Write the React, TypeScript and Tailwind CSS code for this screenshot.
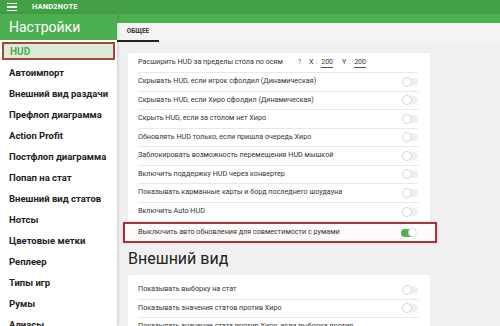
import React from "react";

const sideItems = [
  "Автоимпорт",
  "Внешний вид раздачи",
  "Префлоп диаграмма",
  "Action Profit",
  "Постфлоп диаграмма",
  "Попап на стат",
  "Внешний вид статов",
  "Нотсы",
  "Цветовые метки",
  "Реплеер",
  "Типы игр",
  "Румы",
  "Алиасы",
];

const rows1 = [
  "Скрывать HUD, если игрок сфолдил (Динамическая)",
  "Скрывать HUD, если Хиро сфолдил (Динамическая)",
  "Скрыть HUD, если за столом нет Хиро",
  "Обновлять HUD только, если пришла очередь Хиро",
  "Заблокировать возможность перемещения HUD мышкой",
  "Включить поддержку HUD через конвертер",
  "Показывать карманные карты и борд последнего шоудауна",
  "Включить Auto HUD",
];

const rows2 = [
  "Показывать выборку на стат",
  "Показывать значения статов против Хиро",
];

function Toggle({ on }: { on?: boolean }) {
  if (on) {
    return (
      <div className="relative w-[16px] h-[10px] shrink-0">
        <div className="absolute left-0 top-[1px] w-[13px] h-[8px] rounded-full bg-[#4caf50]" />
        <div className="absolute left-[7px] top-0 w-[9px] h-[9px] rounded-full bg-white border border-[#ddd]" />
      </div>
    );
  }
  return (
    <div className="relative w-[16px] h-[10px] shrink-0">
      <div className="absolute left-[3px] top-[1px] w-[13px] h-[8px] rounded-full bg-[#f0f0f0]" />
      <div className="absolute left-0 top-0 w-[10px] h-[10px] rounded-full bg-white border border-[#d6d6d6]" />
    </div>
  );
}

function Row({ text, last }: { text: string; last?: boolean }) {
  return (
    <div
      className={
        "flex items-center justify-between h-[18.5px] " +
        (last ? "" : "border-b border-[#e8e8e8]")
      }
    >
      <span className="text-[7.2px] text-[#333]">{text}</span>
      <Toggle />
    </div>
  );
}

export default function App() {
  return (
    <div
      className="w-[500px] h-[326px] overflow-hidden bg-[#f0f0f0] flex flex-col"
      style={{ fontFamily: "Roboto, 'Liberation Sans', sans-serif" }}
    >
      {/* top bar */}
      <div className="h-[14px] bg-[#43a047] flex items-center shrink-0">
        <div className="ml-[7px] w-[10px] flex flex-col gap-[2px]">
          <div className="h-[1.5px] bg-white" />
          <div className="h-[1.5px] bg-white" />
          <div className="h-[1.5px] bg-white" />
        </div>
        <span className="ml-[15px] text-[7.5px] font-bold text-white tracking-[0.2px]">
          HAND2NOTE
        </span>
      </div>
      <div className="flex flex-1 min-h-0">
        {/* sidebar */}
        <div className="w-[117px] shrink-0 bg-white flex flex-col shadow-[1px_0_3px_rgba(0,0,0,0.15)] z-10">
          <div className="h-[26px] bg-[#4caf50] flex items-center pl-[9px] shrink-0">
            <span className="text-[14px] text-white">Настройки</span>
          </div>
          <div className="mt-[2px] mx-[2px] h-[18px] bg-[#dcebd6] border-2 border-[#a5463b] flex items-center pl-[6px]">
            <span className="text-[10px] font-bold text-[#4caf50]">HUD</span>
          </div>
          <div className="flex flex-col pl-[9px] pt-[3px]">
            {sideItems.map((s) => (
              <div key={s} className="h-[21px] flex items-center">
                <span className="text-[9.5px] font-bold text-[#222]">{s}</span>
              </div>
            ))}
          </div>
        </div>
        {/* main */}
        <div className="flex-1 flex flex-col min-w-0">
          <div className="h-[9px] bg-[#4caf50] shrink-0" />
          <div className="h-[19px] bg-[#f4f4f4] flex shrink-0">
            <div className="w-[42px] flex items-center justify-center border-b-2 border-[#222]">
              <span className="text-[6.5px] font-bold text-[#333]">ОБЩЕЕ</span>
            </div>
          </div>
          <div className="relative pl-[11px] pt-[11px]">
            <div className="w-[302px] bg-white rounded-[2px] pl-[10px] pr-[12px] shadow-[0_0_1px_rgba(0,0,0,0.08)]">
              <div className="flex items-center h-[20px] border-b border-[#e8e8e8]">
                <span className="text-[7.2px] text-[#333]">
                  Расширить HUD за пределы стола по осям
                </span>
                <span className="text-[6.5px] text-[#666] ml-[15px]">?</span>
                <span className="text-[7.2px] text-[#333] ml-[8px]">X</span>
                <span className="text-[7.2px] text-[#999] ml-[2px]">:</span>
                <span className="text-[7px] text-[#333] ml-[4px] border-b border-[#555] leading-[9px]">200</span>
                <span className="text-[7.2px] text-[#333] ml-[9px]">Y</span>
                <span className="text-[7.2px] text-[#999] ml-[2px]">:</span>
                <span className="text-[7px] text-[#333] ml-[4px] border-b border-[#555] leading-[9px]">200</span>
              </div>
              {rows1.map((r, i) => (
                <Row key={r} text={r} last={i === rows1.length - 1} />
              ))}
              <div className="h-[23px]" />
            </div>
            {/* highlighted row overlay */}
            <div className="absolute left-[6px] top-[180px] w-[314px] h-[21px] border-2 border-[#a5343b] bg-[#fffafa] shadow-[0_0_2px_rgba(200,60,60,0.35)] flex items-center justify-between pl-[13px] pr-[18px]">
              <span className="text-[7.2px] text-[#333]">
                Выключить авто обновления для совместимости с румами
              </span>
              <Toggle on />
            </div>
            <div className="mt-[7px] h-[16px] flex items-center">
              <span className="text-[16px] text-[#222]">Внешний вид</span>
            </div>
            <div className="mt-[8px] w-[302px] bg-white rounded-[2px] pl-[10px] pr-[12px] pt-[6px]">
              {rows2.map((r) => (
                <Row key={r} text={r} />
              ))}
              <div className="flex items-start justify-between h-[20px] pt-[3px]">
                <span className="text-[7.2px] text-[#333] leading-[10px]">
                  Показывать значение стата против Хиро, если выборка против
                </span>
              </div>
            </div>
          </div>
        </div>
      </div>
    </div>
  );
}
